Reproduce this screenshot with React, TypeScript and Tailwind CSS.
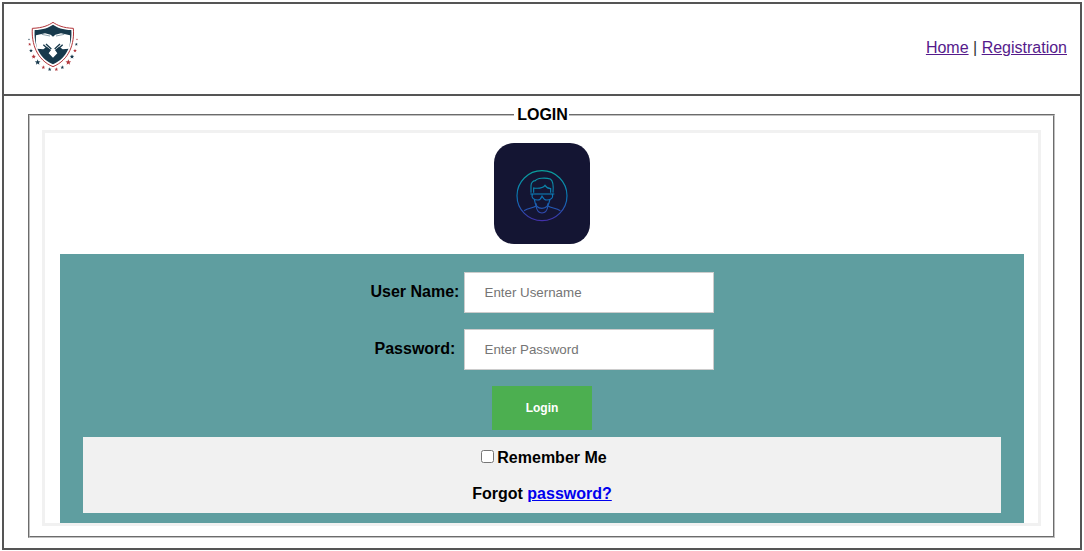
const navyStars: [number, number, number][] = [
  [87, 118, 3],
  [93, 152, 6],
  [113, 187, 9],
  [149, 208, 6],
  [187, 202, 6],
  [216, 170, 7],
  [229, 133, 5],
];
const redStars: [number, number, number][] = [
  [89, 133, 5],
  [101, 170, 7],
  [130, 202, 6],
  [169, 208, 6],
  [205, 187, 9],
  [225, 152, 6],
  [231, 118, 3],
];

function starPoints(cx: number, cy: number, r: number) {
  const pts: string[] = [];
  for (let i = 0; i < 10; i++) {
    const rad = i % 2 === 0 ? r : r * 0.42;
    const a = -Math.PI / 2 + (i * Math.PI) / 5;
    pts.push(`${cx + rad * Math.cos(a)},${cy + rad * Math.sin(a)}`);
  }
  return pts.join(" ");
}

function Logo() {
  return (
    <svg width="50" height="50" viewBox="84 63 150 150" className="mb-[6px]">
      <path d="M159 67 C172 76 190 84 220 85 C224 130 208 180 159 200 C110 180 94 130 97 85 C128 84 146 76 159 67Z" fill="#fff" stroke="#b1353a" strokeWidth="3" />
      <path d="M159 74 C172 83 188 89 214 90 C217 130 203 174 159 193 C115 174 101 130 104 90 C130 89 146 83 159 74Z" fill="#17394c" />
      <path d="M108 106 L135 100 L152 104 L159 110 L166 104 L183 100 L210 106 C211 120 210 134 207 146 L188 148 L178 140 L165 150 L172 160 L159 173 L146 160 L153 150 L140 140 L130 148 L111 146 C108 134 107 120 108 106Z" fill="#fff" />
      <path d="M130 134 L150 152 M138 132 L154 147 M188 134 L168 152 M180 132 L164 147" stroke="#17394c" strokeWidth="4" fill="none" />
      <path d="M125 103 L150 108 M193 103 L168 108" stroke="#8fa2ad" strokeWidth="3" fill="none" />
      {navyStars.map(([x, y, r], i) => (
        <polygon key={i} points={starPoints(x, y, r)} fill="#17394c" />
      ))}
      {redStars.map(([x, y, r], i) => (
        <polygon key={i} points={starPoints(x, y, r)} fill="#b1353a" />
      ))}
    </svg>
  );
}

function Avatar() {
  return (
    <svg width="56.67" height="56.67" viewBox="98 193 170 170" fill="none" strokeWidth="3.4">
      <defs>
        <linearGradient id="g" gradientUnits="userSpaceOnUse" x1="185" y1="210" x2="185" y2="360">
          <stop offset="0" stopColor="#0aa09c" />
          <stop offset="0.55" stopColor="#0b74b8" />
          <stop offset="1" stopColor="#4330aa" />
        </linearGradient>
      </defs>
      <g stroke="url(#g)">
        <circle cx="185" cy="285" r="75" />
        <path d="M131 330 C145 322 160 322 167 316 M203 316 C212 322 228 322 240 330" />
        <path d="M167 308 L167 316 C172 344 198 344 203 316 L203 308" />
        <path d="M152 276 L152 255 C152 245 160 240 165 240 C170 232 195 230 210 235 C218 240 220 255 218 276" />
        <path d="M160 276 L160 262 C175 264 188 262 194 254 C198 260 206 264 211 264 L211 276" />
        <path d="M150 280 L222 280" />
        <path d="M156 280 C152 293 162 298 173 298 C182 298 183 289 185 286 C187 289 190 298 199 298 C210 298 220 293 216 280" />
        <path d="M162 296 C164 311 172 323 185 323 C198 323 206 311 209 296" />
      </g>
    </svg>
  );
}

export default function App() {
  return (
    <div className="h-[551px] w-[1084px] overflow-hidden bg-white pl-[2px] pt-[2px] font-['Liberation_Sans',Arial,sans-serif] text-black">
      <div className="h-[548px] w-[1080px] border-2 border-[#555555]">
        <header className="flex h-[92px] items-center justify-between border-b-2 border-[#555555] pl-[24px] pr-[13px]">
          <Logo />
          <nav className="mb-[2px] text-[16px] leading-[18px] text-[#333333]">
            <a href="#" className="text-[#551a8b] underline">Home</a> | <a href="#" className="text-[#551a8b] underline">Registration</a>
          </nav>
        </header>
        <div className="px-[24px] pt-[10px]">
          <fieldset className="h-[432px] w-[1027px] border-2 border-[#c0c0c0] [border-style:groove] px-[12px] pt-[6px]">
            <legend className="mx-auto pl-[3px] pr-[1px] text-[16px] font-bold leading-[18px]">LOGIN</legend>
            <div className="h-[396px] w-[999px] border-[3px] border-[#f1f1f1] px-[15px] pt-[10px]">
              <div className="flex justify-center">
                <div className="flex h-[101px] w-[96px] items-center justify-center rounded-[20px] bg-[#141533]">
                  <Avatar />
                </div>
              </div>
              <main className="mt-[10px] h-[269px] w-[964px] bg-[#5f9ea0] px-[23px] pt-[18px]">
                <div className="flex h-[41px] items-center justify-center">
                  <label className="mb-[2px] w-[93px] whitespace-nowrap pr-[5px] text-center text-[16px] font-bold leading-[18px]">User Name:</label>
                  <input className="h-[41px] w-[250px] border border-[#cccccc] bg-white pl-[20px] text-[13.33px] outline-none placeholder:text-[#757575]" placeholder="Enter Username" />
                </div>
                <div className="mt-[16px] flex h-[41px] items-center justify-center">
                  <label className="mb-[2px] w-[93px] whitespace-nowrap pr-[4px] text-center text-[16px] font-bold leading-[18px]">Password:</label>
                  <input className="h-[41px] w-[250px] border border-[#cccccc] bg-white pl-[20px] text-[13.33px] outline-none placeholder:text-[#757575]" placeholder="Enter Password" />
                </div>
                <div className="mt-[16px] flex justify-center">
                  <button className="h-[44px] w-[100px] bg-[#4caf50] text-[12px] font-bold text-white">Login</button>
                </div>
                <div className="mt-[7px] h-[76px] w-[918px] bg-[#f1f1f1] pt-[12px] text-center text-[16px] font-bold leading-[18px]">
                  <div className="flex items-center justify-center">
                    <input type="checkbox" className="mb-[4px] ml-[4px] mr-[3px] h-[13px] w-[13px]" />
                    <span>Remember Me</span>
                  </div>
                  <div className="mt-[18px]">
                    Forgot <a href="#" className="text-[#0000ee] underline">password?</a>
                  </div>
                </div>
              </main>
            </div>
          </fieldset>
        </div>
      </div>
    </div>
  );
}
